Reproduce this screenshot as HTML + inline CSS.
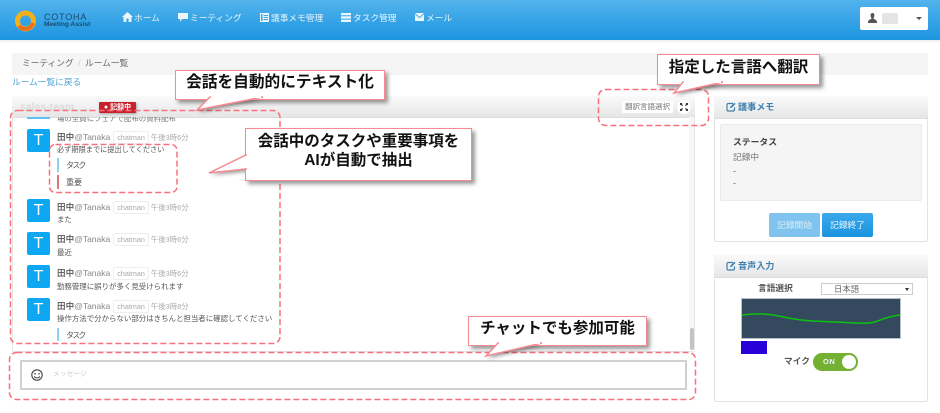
<!DOCTYPE html>
<html lang="ja"><head><meta charset="utf-8"><style>
html,body{margin:0;padding:0}
body{width:940px;height:413px;overflow:hidden;background:#fff;position:relative;font-family:"Liberation Sans","Noto Sans CJK JP",sans-serif;color:#555}
.a,.a *{box-sizing:border-box}
.a{position:absolute;white-space:nowrap}
.nav{color:#e8f4fc;font-size:8.7px;line-height:12px;top:12px}
.av{position:absolute;left:27px;width:23px;height:23px;background:#0ea7f2;border-radius:2px;color:#fff;font-size:16px;line-height:23px;text-align:center}
.nm{position:absolute;left:57px;font-size:8.5px;line-height:12px;color:#888;white-space:nowrap}
.nm b{font-weight:bold;color:#666;font-size:8.6px}
.tg{display:inline-block;border:1px solid #eee;border-radius:2px;padding:0 3px;margin:0 2px 0 3px;color:#aaa;font-size:7.2px;line-height:11px}
.tm{color:#aaa;font-size:7.4px}
.ms{position:absolute;left:57px;font-size:7.45px;line-height:11px;color:#555;white-space:nowrap}
.bar{position:absolute;left:57px;width:2px;height:14px}
.lb{position:absolute;left:66px;font-size:8px;line-height:11px;color:#555}
.callout{position:absolute;background:#fff;border:1.5px solid #f58a92;box-shadow:3px 3px 4px rgba(0,0,0,.4);color:#111;font-weight:bold;text-align:center;white-space:nowrap;z-index:1;font-size:15.5px}
.ph{position:absolute;background:linear-gradient(#fafafa,#e6e6e6);border-bottom:1px solid #ddd}
.pt{position:absolute;color:#3d7fae;font-weight:bold;font-size:9.1px;line-height:12px}
</style></head><body>

<div class="a" style="left:0;top:0;width:940px;height:40px;background:linear-gradient(#53b3ec,#1c95e0)"></div>
<div class="a" style="left:0;top:40px;width:940px;height:2px;background:#f2f2f2"></div>
<svg class="a" style="left:14px;top:8px" width="23" height="26" viewBox="0 0 23 26"><circle cx="11.500" cy="13" r="8" fill="none" stroke="#f4b018" stroke-width="5"/><path d="M5 18A8 8 0 0 0 19 15" fill="none" stroke="#e8701a" stroke-width="4"/></svg>
<div class="a" style="left:44px;top:12px;color:#1a4a72;font-size:9px;line-height:11px;letter-spacing:.8px">COTOHA</div>
<div class="a" style="left:44px;top:21px;color:#1a4a72;font-size:6.600px;line-height:8px;font-weight:bold">Meeting Assist</div>

<svg class="a" style="left:122px;top:12px" width="11" height="10" viewBox="0 0 11 10"><path d="M5.500 0L11 5H9.500V10H6.600V6.500H4.400V10H1.500V5H0Z" fill="#eaf6fd"/></svg>
<div class="a nav" style="left:134px">ホーム</div>
<svg class="a" style="left:178px;top:13px" width="10" height="9" viewBox="0 0 10 9"><path d="M0 0H10V6H4L2 9V6H0Z" fill="#eaf6fd"/></svg>
<div class="a nav" style="left:190px">ミーティング</div>
<svg class="a" style="left:260px;top:13px" width="9" height="9" viewBox="0 0 9 9"><path d="M0 0H9V9H0ZM1 1V8H2.500V1ZM3.500 2V3H8V2ZM3.500 4V5H8V4ZM3.500 6V7H8V6Z" fill="#eaf6fd" fill-rule="evenodd"/></svg>
<div class="a nav" style="left:271px">議事メモ管理</div>
<svg class="a" style="left:341px;top:13px" width="10" height="9" viewBox="0 0 10 9"><path d="M0 0H10V2.300H0ZM0 3.300H10V5.600H0ZM0 6.600H10V9H0Z" fill="#eaf6fd"/></svg>
<div class="a nav" style="left:353px">タスク管理</div>
<svg class="a" style="left:415px;top:13px" width="9" height="8" viewBox="0 0 9 8"><path d="M0 0H9L4.500 4ZM0 1.200V8H9V1.200L4.500 5.200Z" fill="#eaf6fd"/></svg>
<div class="a nav" style="left:426px">メール</div>

<div class="a" style="left:860px;top:7px;width:68px;height:23px;background:#fff;border-radius:2px"></div>
<svg class="a" style="left:868px;top:13px" width="9" height="10" viewBox="0 0 9 10"><path d="M4.500 0C6 0 6.600 1.300 6.400 3C6.200 4.300 5.600 5 5.400 5.400C5.600 6.200 9 6.600 9 9V10H0V9C0 6.600 3.400 6.200 3.600 5.400C3.400 5 2.800 4.300 2.600 3C2.400 1.300 3 0 4.500 0Z" fill="#555"/></svg>
<div class="a" style="left:882px;top:13px;width:16px;height:11px;background:#e4e4e4;border-radius:2px"></div>
<div class="a" style="left:916px;top:17px;width:0;height:0;border:3px solid transparent;border-top-color:#555"></div>

<div class="a" style="left:12px;top:53px;width:916px;height:22px;background:#f5f5f5;border-radius:2px"></div>
<div class="a" style="left:22px;top:57px;font-size:8.700px;line-height:13px;color:#666">ミーティング<span style="color:#ccc;margin:0 4.500px">/</span>ルーム一覧</div>
<div class="a" style="left:12px;top:76px;font-size:8.700px;line-height:13px;color:#4ba3d8">ルーム一覧に戻る</div>

<!-- main panel -->
<div class="a" style="left:12px;top:96px;width:683px;height:256px;background:#fff;border:1px solid #e6e6e6;border-radius:2px"></div>
<div class="ph" style="left:12px;top:96px;width:683px;height:21px"></div>
<div class="a" style="left:20px;top:101px;font-size:10.500px;line-height:12px;color:#dcdcdc;font-weight:bold">sales-team</div>
<div class="a" style="left:99px;top:102px;width:37px;height:11px;background:#c8202c;border-radius:1px;color:#fff;font-size:7px;line-height:11px;font-weight:bold;text-align:center;box-shadow:1px 1px 2px rgba(0,0,0,.3)">● 記録中</div>
<div class="a" style="left:622px;top:101px;width:51px;height:12px;background:#fff;border-radius:1px;color:#777;font-size:7.500px;line-height:12px;text-align:center">翻訳言語選択</div>
<div class="a" style="left:677px;top:100px;width:14px;height:14px;background:#fff;border-radius:7px"></div>
<svg class="a" style="left:680px;top:103px" width="8" height="8" viewBox="0 0 8 8"><path d="M0 0H2.500L1.700 .8L3 2.200L2.200 3L.8 1.700L0 2.500ZM8 0V2.500L7.200 1.700L5.800 3L5 2.200L6.300 .8L5.500 0ZM0 8V5.500L.8 6.300L2.200 5L3 5.800L1.700 7.200L2.500 8ZM8 8H5.500L6.300 7.200L5 5.800L5.800 5L7.200 6.300L8 5.500Z" fill="#333"/></svg>

<div class="a" style="left:13px;top:117px;width:676px;height:227px;overflow:hidden">
  <div style="position:absolute;left:14px;top:0;width:23px;height:2px;background:#5fc0f5"></div>
  <div class="ms" style="left:44px;top:-4px;color:#777">場の全員にフェアで配布の資料配布</div>
</div>
<div class="a" style="left:689px;top:117px;width:5px;height:233px;background:#f7f7f7"></div>
<div class="a" style="left:690px;top:328px;width:4px;height:22px;background:#c4c4c4;border-radius:2px"></div>

<div class="av" style="top:129px">T</div>
<div class="nm" style="top:131px"><b>田中</b>@Tanaka<span class="tg">chatman</span><span class="tm">午後3時6分</span></div>
<div class="ms" style="top:144px;font-size:7.2px">必ず期限までに提出してください</div>
<div class="bar" style="top:158px;background:#8fd0f5"></div>
<div class="lb" style="top:160px;letter-spacing:-1.800px">タスク</div>
<div class="bar" style="top:175px;background:#e0757c"></div>
<div class="lb" style="top:177px">重要</div>

<div class="av" style="top:199px">T</div>
<div class="nm" style="top:201px"><b>田中</b>@Tanaka<span class="tg">chatman</span><span class="tm">午後3時6分</span></div>
<div class="ms" style="top:214px">また</div>

<div class="av" style="top:232px">T</div>
<div class="nm" style="top:233px"><b>田中</b>@Tanaka<span class="tg">chatman</span><span class="tm">午後3時6分</span></div>
<div class="ms" style="top:247px">最近</div>

<div class="av" style="top:265px">T</div>
<div class="nm" style="top:267px"><b>田中</b>@Tanaka<span class="tg">chatman</span><span class="tm">午後3時6分</span></div>
<div class="ms" style="top:281px">勤務管理に誤りが多く見受けられます</div>

<div class="av" style="top:298px">T</div>
<div class="nm" style="top:300px"><b>田中</b>@Tanaka<span class="tg">chatman</span><span class="tm">午後3時8分</span></div>
<div class="ms" style="top:313px">操作方法で分からない部分はきちんと担当者に確認してください</div>
<div class="bar" style="top:328px;height:13px;background:#8fd0f5"></div>
<div class="lb" style="top:330px;letter-spacing:-1.800px">タスク</div>

<div class="a" style="left:20px;top:360px;width:667px;height:30px;background:#fff;border:2px solid #d0d0d0"></div>
<svg class="a" style="left:30px;top:368px" width="14" height="14" viewBox="0 0 14 14"><circle cx="7" cy="7" r="5.200" fill="none" stroke="#444" stroke-width="1.100"/><circle cx="5" cy="5.800" r=".8" fill="#444"/><circle cx="9" cy="5.800" r=".8" fill="#444"/><path d="M4.200 8.300C5 10.400 9 10.400 9.800 8.300" fill="none" stroke="#444" stroke-width="1"/></svg>
<div class="a" style="left:53px;top:369px;font-size:6.800px;line-height:12px;color:#ccc">メッセージ</div>

<!-- right panel 1 -->
<div class="a" style="left:714px;top:96px;width:214px;height:146px;background:#fff;border:1px solid #e4e4e4;border-radius:2px"></div>
<div class="ph" style="left:714px;top:96px;width:214px;height:22px"></div>
<svg class="a" style="left:726px;top:102px" width="10" height="10" viewBox="0 0 10 10"><path d="M7 1.500H2.500C1.500 1.500 1 2 1 3V7.500C1 8.500 1.500 9 2.500 9H7C8 9 8.500 8.500 8.500 7.500V5.500" fill="none" stroke="#3d7fae" stroke-width="1.200"/><path d="M4 6.300L4.500 4.500L8.300 .7L9.500 1.900L5.700 5.800Z" fill="#3d7fae"/></svg>
<div class="pt" style="left:738px;top:101px">議事メモ</div>
<div class="a" style="left:720px;top:124px;width:202px;height:77px;background:#f5f5f5;border:1px solid #eaeaea;border-radius:2px"></div>
<div class="a" style="left:733px;top:136px;font-size:8.800px;line-height:13px;font-weight:bold;color:#444">ステータス</div>
<div class="a" style="left:733px;top:151px;font-size:8.700px;line-height:13px;color:#777">記録中</div>
<div class="a" style="left:733px;top:165px;font-size:9px;line-height:12px;color:#666">-</div>
<div class="a" style="left:733px;top:177px;font-size:9px;line-height:12px;color:#666">-</div>
<div class="a" style="left:769px;top:213px;width:51px;height:24px;background:#7fc3ee;border-radius:2px;color:#d8eefa;font-size:8.700px;line-height:24px;text-align:center">記録開始</div>
<div class="a" style="left:822px;top:213px;width:51px;height:24px;background:linear-gradient(#3ba9ea,#1a94e0);border-radius:2px;color:#eaf6fd;font-size:8.700px;line-height:24px;text-align:center">記録終了</div>

<!-- right panel 2 -->
<div class="a" style="left:714px;top:255px;width:214px;height:147px;background:#fff;border:1px solid #e4e4e4;border-radius:2px"></div>
<div class="ph" style="left:714px;top:255px;width:214px;height:22px"></div>
<svg class="a" style="left:726px;top:261px" width="10" height="10" viewBox="0 0 10 10"><path d="M7 1.500H2.500C1.500 1.500 1 2 1 3V7.500C1 8.500 1.500 9 2.500 9H7C8 9 8.500 8.500 8.500 7.500V5.500" fill="none" stroke="#3d7fae" stroke-width="1.200"/><path d="M4 6.300L4.500 4.500L8.300 .7L9.500 1.900L5.700 5.800Z" fill="#3d7fae"/></svg>
<div class="pt" style="left:738px;top:260px">音声入力</div>
<div class="a" style="left:758px;top:282px;font-size:8.700px;line-height:13px;font-weight:bold;color:#555">言語選択</div>
<div class="a" style="left:821px;top:283px;width:92px;height:12px;background:#fff;border:1px solid #ccc;font-size:8.400px;line-height:11px;color:#666;padding-left:12px">日本語</div>
<div class="a" style="left:905px;top:288px;width:0;height:0;border:2.500px solid transparent;border-top:3px solid #333"></div>
<svg class="a" style="left:741px;top:298px" width="160" height="41" viewBox="0 0 160 41"><rect x=".5" y=".5" width="159" height="40" fill="#34495e" stroke="#b8c0c8"/><path d="M1 17C12 16 22 15 35 17.500S48 20.500 60 22S90 23.500 115 25S135 20 159 17" fill="none" stroke="#0bc20f" stroke-width="1.500"/></svg>
<div class="a" style="left:741px;top:341px;width:26px;height:13px;background:#2a00d8"></div>
<div class="a" style="left:784px;top:354px;font-size:8.700px;line-height:14px;font-weight:bold;color:#555">マイク</div>
<div class="a" style="left:813px;top:353px;width:45px;height:18px;background:#74b032;border-radius:9px;color:#eef;font-size:7.500px;line-height:18px;font-weight:bold;padding-left:10px;letter-spacing:.5px">ON</div>
<div class="a" style="left:842px;top:355px;width:14px;height:14px;background:#fff;border-radius:7px"></div>

<!-- dashed overlays -->
<svg class="a" style="left:0;top:0" width="940" height="413" viewBox="0 0 940 413">
  <g fill="none" stroke="#f8707c" stroke-width="1.500" stroke-dasharray="6 3">
    <rect x="10.500" y="110.500" width="269.500" height="233" rx="7"/>
    <rect x="49.500" y="144.500" width="127.500" height="48" rx="6"/>
    <rect x="9.500" y="352.500" width="686" height="47" rx="7"/>
    <rect x="598.500" y="89.500" width="110" height="36" rx="7"/>
  </g>
</svg>

<!-- callouts -->
<svg class="a" style="left:0;top:0;z-index:1;filter:drop-shadow(2px 2px 2px rgba(0,0,0,.45))" width="940" height="413" viewBox="0 0 940 413">
  <path d="M210 97L197 110L263 97Z" fill="#fff"/>
  <path d="M683 82L674 93L723 82Z" fill="#fff"/>
  <path d="M246 155L209 173L246 169Z" fill="#fff"/>
  <path d="M498 343L486 356L542 343Z" fill="#fff"/>
</svg>
<div class="callout" style="left:175px;top:70px;width:208px;height:28px;line-height:24px;font-size:15.700px">会話を自動的にテキスト化</div>
<div class="callout" style="left:657px;top:54px;width:161px;height:29px;line-height:25px">指定した言語へ翻訳</div>
<div class="callout" style="left:245px;top:128px;width:225px;height:48px;line-height:19px;padding-top:3px">会話中のタスクや重要事項を<br>AIが自動で抽出</div>
<div class="callout" style="left:468px;top:316px;width:177px;height:28px;line-height:23px">チャットでも参加可能</div>
<svg class="a" style="left:0;top:0;z-index:2" width="940" height="413" viewBox="0 0 940 413">
  <g fill="#fff" stroke="#f58a92" stroke-width="1.500">
  <path d="M210 97L197 110L263 97Z"/>
  <path d="M683 82L674 93L723 82Z"/>
  <path d="M246 155L209 173L246 169Z"/>
  <path d="M498 343L486 356L542 343Z"/>
  </g>
</svg>
<div class="a" style="left:211px;top:95px;width:50px;height:3px;background:#fff;z-index:3"></div>
<div class="a" style="left:684px;top:80px;width:37px;height:3px;background:#fff;z-index:3"></div>
<div class="a" style="left:245px;top:156px;width:3px;height:12px;background:#fff;z-index:3"></div>
<div class="a" style="left:499px;top:341px;width:41px;height:3px;background:#fff;z-index:3"></div>
</body></html>
